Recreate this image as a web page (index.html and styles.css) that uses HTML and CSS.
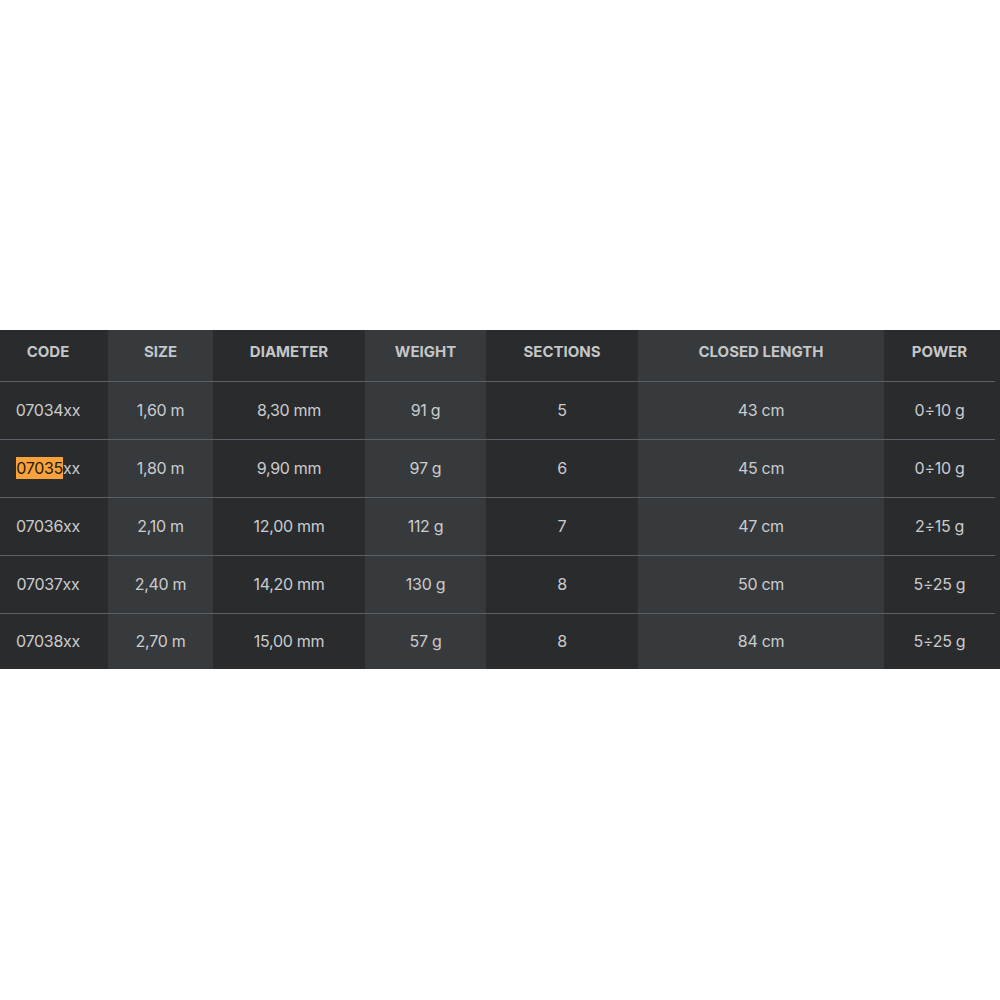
FILE: index.html
```html
<!DOCTYPE html>
<html>
<head>
<meta charset="utf-8">
<link rel="stylesheet" href="styles.css">
</head>
<body>
<div class="page">
  <div class="wrap">
    <table class="specs">
      <thead>
        <tr>
          <th class="c1">CODE</th>
          <th class="c2">SIZE</th>
          <th class="c3">DIAMETER</th>
          <th class="c4">WEIGHT</th>
          <th class="c5">SECTIONS</th>
          <th class="c6">CLOSED LENGTH</th>
          <th class="c7">POWER</th>
        </tr>
      </thead>
      <tbody>
        <tr><td class="c1">07034xx</td><td class="c2">1,60 m</td><td class="c3">8,30 mm</td><td class="c4">91 g</td><td class="c5">5</td><td class="c6">43 cm</td><td class="c7">0÷10 g</td></tr>
        <tr><td class="c1"><mark class="hl">07035</mark>xx</td><td class="c2">1,80 m</td><td class="c3">9,90 mm</td><td class="c4">97 g</td><td class="c5">6</td><td class="c6">45 cm</td><td class="c7">0÷10 g</td></tr>
        <tr><td class="c1">07036xx</td><td class="c2">2,10 m</td><td class="c3">12,00 mm</td><td class="c4">112 g</td><td class="c5">7</td><td class="c6">47 cm</td><td class="c7">2÷15 g</td></tr>
        <tr><td class="c1">07037xx</td><td class="c2">2,40 m</td><td class="c3">14,20 mm</td><td class="c4">130 g</td><td class="c5">8</td><td class="c6">50 cm</td><td class="c7">5÷25 g</td></tr>
        <tr class="last"><td class="c1">07038xx</td><td class="c2">2,70 m</td><td class="c3">15,00 mm</td><td class="c4">57 g</td><td class="c5">8</td><td class="c6">84 cm</td><td class="c7">5÷25 g</td></tr>
      </tbody>
    </table>
  </div>
</div>
</body>
</html>
```
FILE: styles.css
```css
html, body {
  margin: 0;
  padding: 0;
  background: #ffffff;
}
.page {
  width: 1000px;
  height: 1000px;
  padding-top: 330px;
  box-sizing: border-box;
}
.wrap {
  width: 1000px;
  background: #2a2b2d;
  padding-right: 5px;
  box-sizing: border-box;
}
.specs {
  width: 995px;
  border-collapse: collapse;
  table-layout: fixed;
  font-family: Inter, "Liberation Sans", sans-serif;
  color: #cbcccd;
}
.specs th, .specs td {
  text-align: center;
  padding: 0;
  border-bottom: 1px solid #5b6068;
}
.specs th {
  height: 51px;
  padding-bottom: 7px;
  box-sizing: border-box;
  font-size: 15px;
  font-weight: 700;
  color: #c4c6c8;
  letter-spacing: 0;
}
.specs td {
  height: 57px;
  font-size: 16px;
  font-weight: 400;
  letter-spacing: -0.3px;
}
.specs tr.last td {
  border-bottom: none;
  height: 55px;
}
.c1 { width: 108px; background: #2a2b2d; padding-right: 12px !important; box-sizing: border-box; }
.c2 { width: 105px; background: #373a3d; }
.c3 { width: 152px; background: #2a2b2d; }
.c4 { width: 121px; background: #373a3d; }
.c5 { width: 152px; background: #2a2b2d; }
.c6 { width: 246px; background: #373a3d; }
.c7 { width: 111px; background: #2a2b2d; }
.hl {
  background: #f7a23c;
  color: #2a1a08;
  padding: 1px 0;
}
```
